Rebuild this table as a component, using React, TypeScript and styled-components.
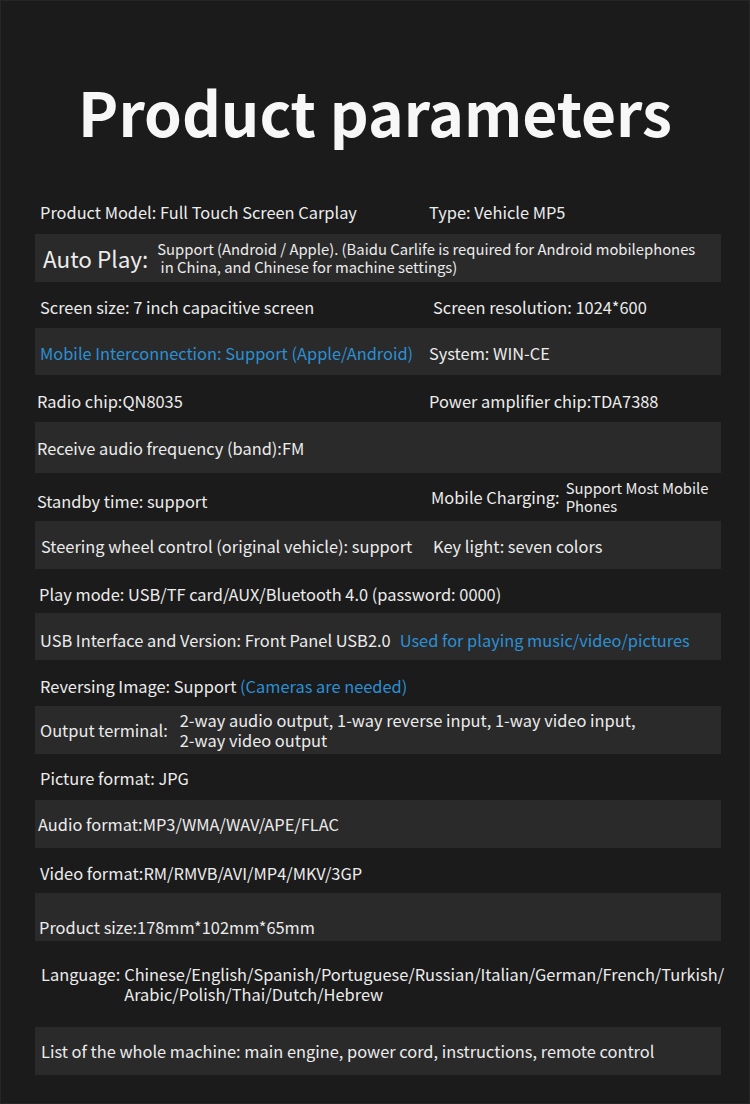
import React from "react";
import styled, { createGlobalStyle } from "styled-components";

const Global = createGlobalStyle`
  html, body { margin: 0; padding: 0; background: #1b1b1b; }
  body { font-family: "Noto Sans CJK SC", "Noto Sans", sans-serif; }
`;

const Page = styled.div`
  box-sizing: border-box;
  width: 750px;
  height: 1104px;
  background: #1b1b1b;
  border: 1px solid #262626;
  color: #ececec;
  overflow: hidden;
`;

const Title = styled.h1`
  margin: 0;
  height: 189px;
  padding-top: 65px;
  box-sizing: border-box;
  text-align: center;
  font-family: "Noto Sans CJK SC", "Noto Sans", sans-serif;
  font-weight: 700;
  font-size: 60.5px;
  line-height: 90px;
  color: #f7f7f7;
  letter-spacing: 0;
`;

const Table = styled.div`
  width: 686px;
  margin-left: 34px;
  display: flex;
  flex-direction: column;
`;

const Row = styled.div<{ $h: number; $band?: boolean; $split?: number }>`
  height: ${(p) => p.$h}px;
  background: ${(p) => (p.$band ? "#2a2a2a" : "transparent")};
  display: grid;
  grid-template-columns: ${(p) => (p.$split ? `${p.$split}px 1fr` : "1fr")};
  align-items: center;
`;

const Cell = styled.div<{ $x: number; $pt?: number; $top?: boolean }>`
  padding-left: ${(p) => p.$x}px;
  padding-top: ${(p) => p.$pt ?? 0}px;
  font-size: 16.4px;
  line-height: 20px;
  white-space: nowrap;
  display: flex;
  align-items: ${(p) => (p.$top ? "flex-start" : "center")};
`;

const Blue = styled.span<{ $gap?: number }>`
  color: #2b90d4;
  margin-left: ${(p) => p.$gap ?? 0}px;
`;

const Big = styled.span`
  font-size: 22.5px;
  line-height: 28px;
  margin-right: 9px;
`;

const Label = styled.span<{ $gap: number }>`
  margin-right: ${(p) => p.$gap}px;
`;

const Small = styled.span`
  font-size: 14.8px;
  line-height: 18px;
`;

const Lines = styled.span<{ $lh: number }>`
  line-height: ${(p) => p.$lh}px;
`;

export default function App() {
  return (
    <>
      <Global />
      <Page>
        <Title>Product parameters</Title>
        <Table>
          <Row $h={44} $split={394}>
            <Cell $x={5}>Product Model: Full Touch Screen Carplay</Cell>
            <Cell $x={0}>Type: Vehicle MP5</Cell>
          </Row>
          <Row $h={48} $band>
            <Cell $x={8}>
              <Big>Auto Play:</Big>
              <Small>
                Support (Android / Apple). (Baidu Carlife is required for Android mobilephones
                <br />
                &nbsp;in China, and Chinese for machine settings)
              </Small>
            </Cell>
          </Row>
          <Row $h={46} $split={398}>
            <Cell $x={5} $pt={4}>Screen size: 7 inch capacitive screen</Cell>
            <Cell $x={0} $pt={4}>Screen resolution: 1024*600</Cell>
          </Row>
          <Row $h={47} $band $split={394}>
            <Cell $x={5} $pt={2}>
              <Blue>Mobile Interconnection: Support (Apple/Android)</Blue>
            </Cell>
            <Cell $x={0} $pt={2}>System: WIN-CE</Cell>
          </Row>
          <Row $h={47} $split={394}>
            <Cell $x={2} $pt={5}>Radio chip:QN8035</Cell>
            <Cell $x={0} $pt={5}>Power amplifier chip:TDA7388</Cell>
          </Row>
          <Row $h={51} $band>
            <Cell $x={2} $pt={1}>Receive audio frequency (band):FM</Cell>
          </Row>
          <Row $h={48} $split={396}>
            <Cell $x={2} $pt={8}>Standby time: support</Cell>
            <Cell $x={0}>
              <Label $gap={6}>Mobile Charging:</Label>
              <Small>
                Support Most Mobile
                <br />
                Phones
              </Small>
            </Cell>
          </Row>
          <Row $h={48} $band $split={398}>
            <Cell $x={6} $pt={1}>Steering wheel control (original vehicle): support</Cell>
            <Cell $x={0} $pt={1}>Key light: seven colors</Cell>
          </Row>
          <Row $h={44}>
            <Cell $x={4} $pt={6}>Play mode: USB/TF card/AUX/Bluetooth 4.0 (password: 0000)</Cell>
          </Row>
          <Row $h={47} $band>
            <Cell $x={5} $pt={7}>
              USB Interface and Version: Front Panel USB2.0
              <Blue $gap={9}>Used for playing music/video/pictures</Blue>
            </Cell>
          </Row>
          <Row $h={46}>
            <Cell $x={5} $pt={6}>
              Reversing Image: Support&nbsp;<Blue>(Cameras are needed)</Blue>
            </Cell>
          </Row>
          <Row $h={48} $band>
            <Cell $x={5}>
              <Label $gap={12}>Output terminal:</Label>
              <Lines $lh={20}>
                2-way audio output, 1-way reverse input, 1-way video input,
                <br />
                2-way video output
              </Lines>
            </Cell>
          </Row>
          <Row $h={46}>
            <Cell $x={5} $pt={2}>Picture format: JPG</Cell>
          </Row>
          <Row $h={48} $band>
            <Cell $x={3}>Audio format:MP3/WMA/WAV/APE/FLAC</Cell>
          </Row>
          <Row $h={45}>
            <Cell $x={5} $pt={5}>Video format:RM/RMVB/AVI/MP4/MKV/3GP</Cell>
          </Row>
          <Row $h={48} $band>
            <Cell $x={4} $pt={20}>Product size:178mm*102mm*65mm</Cell>
          </Row>
          <Row $h={86}>
            <Cell $x={6} $top>
              <Label $gap={4}>Language:</Label>
              <Lines $lh={20}>
                Chinese/English/Spanish/Portuguese/Russian/Italian/German/French/Turkish/
                <br />
                Arabic/Polish/Thai/Dutch/Hebrew
              </Lines>
            </Cell>
          </Row>
          <Row $h={48} $band>
            <Cell $x={6}>List of the whole machine: main engine, power cord, instructions, remote control</Cell>
          </Row>
        </Table>
      </Page>
    </>
  );
}
